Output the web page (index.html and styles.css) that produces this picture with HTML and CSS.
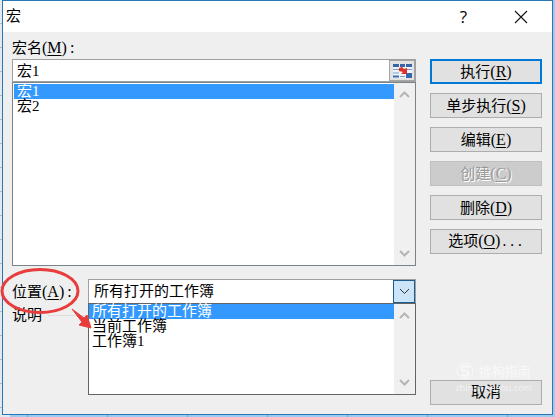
FILE: index.html
```html
<!DOCTYPE html>
<html lang="zh-CN">
<head>
<meta charset="utf-8">
<title>宏</title>
<link rel="stylesheet" href="styles.css">
</head>
<body>
<main class="dialog" role="dialog" aria-labelledby="title">
  <header class="titlebar">
    <h1 id="title">宏</h1>
    <button class="caption" type="button" aria-label="帮助">?</button>
    <button class="caption" type="button" aria-label="关闭">
      <svg width="14" height="14" viewBox="0 0 14 14"><path d="M1 1L13 13M13 1L1 13" fill="none" stroke="#111" stroke-width="1.1"/></svg>
    </button>
  </header>
  <form class="content">
    <section class="fields">
      <label class="name-label" for="name">宏名<span class="key">(<u>M</u>)</span><span class="key colon">:</span></label>
      <div class="name-row">
        <input id="name" type="text" value="宏1">
        <button class="picker" type="button" aria-label="选择单元格">
          <svg width="19" height="14" viewBox="0 0 19 14">
            <path d="M0 0H19V14H0Z" fill="#eef4fa"/>
            <path d="M0 1.500H6M7 1.500H12M13 1.500H19" stroke="#3a64a5" stroke-width="3"/>
            <path d="M0 5.500H6M13 5.500H19M0 9H6M7 12.500H12" stroke="#7d9cc8"/>
            <path d="M0 12.500H6" stroke="#3f6cb0" stroke-width="2"/>
            <path d="M13 9H19V14H13Z" fill="#3566ae"/>
            <path d="M6 4L9 3L11 5L14 4L14 10L8 10L10 8L6 7Z" fill="#dc3028"/>
          </svg>
        </button>
      </div>
      <div class="list">
        <ul role="listbox" aria-label="宏名">
          <li role="option" aria-selected="true">宏1</li>
          <li role="option" aria-selected="false">宏2</li>
        </ul>
        <div class="scrollbar">
          <svg width="11" height="7" viewBox="0 0 11 7"><path d="M1 6L5.500 1.500L10 6"/></svg>
          <svg width="11" height="7" viewBox="0 0 11 7"><path d="M1 1L5.500 5.500L10 1"/></svg>
        </div>
      </div>
      <div class="place-row">
        <label for="place">位置<span class="key">(<u>A</u>)</span><span class="key colon">:</span></label>
        <div class="combo">
          <select id="place">
            <option>所有打开的工作簿</option>
            <option>当前工作簿</option>
            <option>工作簿1</option>
          </select>
          <span class="drop"><svg width="11" height="7" viewBox="0 0 11 7"><path d="M1 1L5.500 5.500L10 1"/></svg></span>
          <div class="list popup">
            <ul role="listbox" aria-label="位置">
              <li role="option" aria-selected="true">所有打开的工作簿</li>
              <li role="option" aria-selected="false">当前工作簿</li>
              <li role="option" aria-selected="false">工作簿1</li>
            </ul>
            <div class="scrollbar">
              <svg width="11" height="7" viewBox="0 0 11 7"><path d="M1 6L5.500 1.500L10 6"/></svg>
              <svg width="11" height="7" viewBox="0 0 11 7"><path d="M1 1L5.500 5.500L10 1"/></svg>
            </div>
          </div>
        </div>
        <svg class="callout" width="94" height="64" viewBox="0 0 94 64">
          <ellipse cx="40" cy="23" rx="38" ry="21.500" fill="none" stroke="#e93c3c" stroke-width="3"/>
          <path d="M72 41L84 50L87 47L91 60L79 57L82 54Z" fill="#e93c3c" stroke="#e93c3c" stroke-linejoin="round"/>
        </svg>
      </div>
      <p class="description">说明</p>
    </section>
    <aside class="actions">
      <button class="primary" type="button">执行<span class="key">(<u>R</u>)</span></button>
      <button type="button">单步执行<span class="key">(<u>S</u>)</span></button>
      <button type="button">编辑<span class="key">(<u>E</u>)</span></button>
      <button type="button" disabled>创建<span class="key">(<u>C</u>)</span></button>
      <button type="button">删除<span class="key">(<u>D</u>)</span></button>
      <button type="button">选项<span class="key">(<u>O</u>)</span><span class="dots">...</span></button>
      <button class="cancel" type="button">取消</button>
      <div class="watermark">
        <div class="brand">
          <svg width="18" height="18" viewBox="0 0 18 18"><circle cx="9" cy="9" r="8" fill="none" stroke="#fff"/><path d="M13 5.500C10 3.500 5 4 5.500 7C6 9.500 12 8 12.500 11C13 14 8 14.500 5 12.500" fill="none" stroke="#fff" stroke-width="2"/></svg>
          <span>搜狗指南</span>
        </div>
        <div class="site">zhinan.sogou.com</div>
      </div>
    </aside>
  </form>
</main>
</body>
</html>
```
FILE: styles.css
```css
* {
  box-sizing: border-box;
}

body {
  min-height: 100vh;
  margin: 0;
  padding: 0 2px 2px;
  display: flex;
  background:
    repeating-linear-gradient(to right, transparent 0 27px, #7f9bb0 27px 28px, transparent 28px 80px) bottom / 100% 2px no-repeat,
    repeating-linear-gradient(transparent 0 23px, #a9bfd0 23px 24px),
    linear-gradient(to right, #e3e9ee 10px, #9fcbf0 10px);
  color: #000;
  font: 15px/15px "Liberation Serif", "Noto Sans CJK SC", serif;
}

button,
input,
select {
  margin: 0;
  color: inherit;
  font: inherit;
  border-radius: 0;
}

.dialog {
  flex: 1;
  display: flex;
  flex-direction: column;
  border: 1px solid #2878b5;
  background: #efefef;
}

.titlebar {
  display: flex;
  align-items: center;
  height: 31px;
  padding: 0 3px;
  background: #fff;
}

h1 {
  flex: 1;
  margin: 0;
  font: inherit;
}

.caption {
  display: grid;
  place-items: center;
  width: 57px;
  height: 30px;
  padding: 0;
  border: 0;
  background: transparent;
  font: 17px "Open Sans", sans-serif;
}

.content {
  flex: 1;
  display: grid;
  grid-template-columns: 1fr 112px;
  column-gap: 14px;
  padding: 7px 10px 9px 9px;
}

.key {
  font-size: 16px;
}

.colon {
  padding-left: 3px;
}

.dots {
  font: 13px "Liberation Mono", monospace;
}

u {
  text-underline-offset: 2px;
}

.name-label {
  display: block;
  height: 20px;
  line-height: 18px;
}

.name-row {
  display: flex;
  height: 23px;
  border: 1px solid #a0a0a0;
  background: #fff;
}

.name-row input {
  flex: 1;
  min-width: 0;
  padding: 0 4px 2px;
  border: 0;
  outline: 0;
  background: transparent;
}

.picker {
  display: grid;
  place-items: center;
  width: 26px;
  padding: 0;
  border: 1px solid #a5a5a5;
  background: #e3e3e3;
}

.list {
  display: flex;
  height: 184px;
  border: 1px solid #7a828a;
  background: #fff;
}

.list ul {
  flex: 1;
  margin: 0;
  padding: 1px 0 0 1px;
  list-style: none;
}

.list li {
  height: 15px;
  padding-left: 3px;
}

.list li[aria-selected="true"] {
  background: #3399ff;
  color: #fff;
}

.scrollbar {
  display: flex;
  flex-direction: column;
  justify-content: space-between;
  align-items: center;
  width: 21px;
  padding: 8px 0;
  background: #f0f0f0;
}

.scrollbar path,
.drop path {
  fill: none;
  stroke: #b5b5b5;
  stroke-width: 2;
}

.place-row {
  position: relative;
  display: grid;
  grid-template-columns: 76px 1fr;
  align-items: center;
  margin-top: 13px;
}

.combo {
  position: relative;
  display: flex;
  height: 25px;
  border: 1px solid #a0a0a0;
  background: #fff;
}

.combo select {
  flex: 1;
  min-width: 0;
  padding: 0 5px;
  border: 0;
  outline: 0;
  appearance: none;
  background: transparent;
}

.drop {
  display: grid;
  place-items: center;
  width: 22px;
  border: 1px solid #1b5d91;
  background: #cce4f7;
}

.drop path {
  stroke: #333;
  stroke-width: 1;
}

.popup {
  position: absolute;
  top: 23px;
  left: -1px;
  right: -1px;
  height: 92px;
  border-color: #646464;
}

.popup ul {
  padding: 0;
}

.callout {
  position: absolute;
  top: -11px;
  left: -12px;
}

.description {
  display: flex;
  align-items: center;
  gap: 6px;
  margin: 2px 0 0;
  line-height: 18px;
}

.description::after {
  content: "";
  flex: 1;
  height: 1px;
  background: #dcdcdc;
}

.actions {
  position: relative;
  display: flex;
  flex-direction: column;
  gap: 9px;
  padding-top: 20px;
}

.actions button {
  height: 25px;
  padding: 0;
  border: 1px solid #adadad;
  background: #e1e1e1;
}

.actions .primary {
  border: 2px solid #0078d7;
}

.actions button:disabled {
  border-color: #bfbfbf;
  background: #cccccc;
  color: #9a9a9a;
  text-shadow: 1px 1px #fff;
}

.actions .cancel {
  margin-top: auto;
}

.watermark {
  position: absolute;
  right: 10px;
  bottom: 9px;
  color: #fff;
  opacity: 0.6;
  pointer-events: none;
}

.brand {
  display: flex;
  align-items: center;
  gap: 5px;
  font-size: 13px;
}

.site {
  font: 9px/16px "Open Sans", sans-serif;
}
```
